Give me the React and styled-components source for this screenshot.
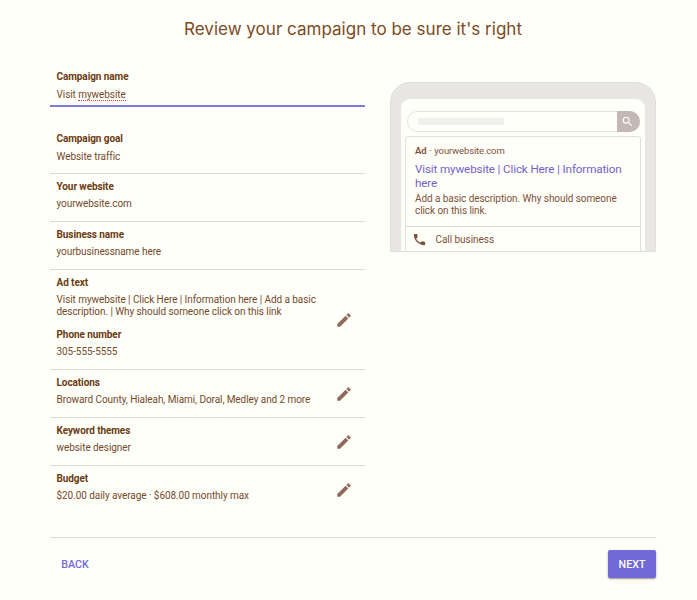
import React from "react";
import styled, { createGlobalStyle } from "styled-components";

const Global = createGlobalStyle`
  * { box-sizing: border-box; }
  body { margin: 0; background: #fffffa; font-family: Roboto, sans-serif; color: #6b3a10; }
`;

const Page = styled.main`
  width: 697px;
  height: 600px;
  overflow: hidden;
  padding: 16px 41px 0 50px;
  display: flex;
  flex-direction: column;
`;
const Title = styled.h1`
  margin: 0;
  height: 26px;
  line-height: 25px;
  text-align: center;
  white-space: nowrap;
  font-family: Inter, sans-serif;
  font-weight: 400;
  font-size: 17.05px;
  color: #7b4a26;
`;
const Columns = styled.div`
  display: flex;
  justify-content: space-between;
  height: 495px;
`;
const Summary = styled.section`
  width: 315px;
  padding-top: 23px;
`;
const Row = styled.div`
  display: flex;
  align-items: center;
  justify-content: space-between;
  height: ${(p) => p.$height || 48}px;
  padding: 0 12px 0 6.5px;
  border-bottom: 1px solid ${(p) => (p.$last ? "transparent" : "#dadad8")};
`;
const NameField = styled.div`
  height: 42px;
  padding: 6px 6.5px 0;
  margin-bottom: 19px;
  border-bottom: 2px solid #7a7de0;
`;
const Details = styled.div`
  flex: 1;
  align-self: flex-start;
  padding-top: 7px;
`;
const Label = styled.div`
  font-size: 10px;
  letter-spacing: -0.08px;
  line-height: 12px;
  font-weight: 700;
  margin-top: ${(p) => p.$top || 0}px;
`;
const Value = styled.div`
  width: 275px;
  margin-top: ${(p) => p.$top ?? 5}px;
  font-size: 10px;
  letter-spacing: -0.07px;
  line-height: 12px;
  color: #744a2c;
  white-space: nowrap;
`;
const Misspelled = styled.span`
  border-bottom: 1px dotted #e8403c;
`;
const IconButton = styled.button`
  display: flex;
  padding: 0;
  border: 0;
  background: none;
  color: #906d5b;
  margin-top: 1px;
`;

const Phone = styled.section`
  width: 266px;
  height: 170px;
  margin-top: 40px;
  padding: 16px 10px 0;
  border: 1px solid #e0dfdc;
  border-radius: 20px 20px 0 0;
  background: #e8e7e4;
`;
const Screen = styled.div`
  height: 152px;
  padding: 12px 4px 0;
  background: #fffffa;
  border-radius: 9px 9px 0 0;
`;
const SearchBar = styled.div`
  display: flex;
  justify-content: space-between;
  align-items: center;
  height: 21px;
  margin: 0 1px 0 2px;
  padding-left: 10px;
  border: 1px solid #e3e2df;
  border-radius: 11px;
`;
const Placeholder = styled.div`
  width: 86px;
  height: 7px;
  border-radius: 1px;
  background: #f0f0ed;
`;
const SearchButton = styled.div`
  width: 23px;
  height: 21px;
  margin-right: -1px;
  display: flex;
  align-items: center;
  justify-content: center;
  padding-right: 3px;
  background: #c4b8b5;
  border-radius: 0 11px 11px 0;
  color: #fffffa;
`;
const AdCard = styled.div`
  height: 115px;
  margin-top: 4px;
  border: 1px solid #e0dfdc;
  border-bottom: 0;
  border-radius: 4px 4px 0 0;
`;
const AdBody = styled.div`
  height: 90px;
  padding: 8px 9px 0;
  border-bottom: 1px solid #dadad8;
  white-space: nowrap;
`;
const AdSource = styled.div`
  font-size: 9.5px;
  letter-spacing: -0.15px;
  word-spacing: 0.6px;
  line-height: 12px;
  color: #7d5139;
`;
const AdBadge = styled.span`
  font-weight: 600;
`;
const AdHeadline = styled.div`
  margin-top: 5px;
  font-size: 11.7px;
  letter-spacing: -0.15px;
  line-height: 14px;
  color: #7461c8;
`;
const AdDescription = styled.div`
  margin-top: 3px;
  font-size: 10px;
  letter-spacing: -0.075px;
  line-height: 12px;
  color: #7d5139;
`;
const CallRow = styled.div`
  display: flex;
  align-items: center;
  height: 24px;
  padding-left: 6px;
  gap: 8.5px;
  font-size: 10px;
  letter-spacing: -0.05px;
  color: #7d5139;
`;
const Footer = styled.footer`
  display: flex;
  justify-content: space-between;
  align-items: flex-start;
  padding-top: 12px;
  border-top: 1px solid #dadad8;
`;
const Button = styled.button`
  height: 28px;
  width: ${(p) => (p.$primary ? 48 : 50)}px;
  padding: 0;
  border: 0;
  border-radius: 2px;
  font: 500 10.7px/29px Roboto, sans-serif;
  color: ${(p) => (p.$primary ? "#fffffa" : "#7069d8")};
  background: ${(p) => (p.$primary ? "#7069d8" : "none")};
  box-shadow: ${(p) => (p.$primary ? "0 1px 2px rgba(90, 50, 40, 0.55)" : "none")};
`;

const Icon = ({ size, d }) => (
  <svg width={size} height={size} viewBox="0 0 24 24" fill="currentColor">
    <path d={d} />
  </svg>
);
const PENCIL =
  "M3 17.25V21h3.75L17.81 9.94l-3.75-3.75L3 17.25zM20.71 7.04a1 1 0 0 0 0-1.41l-2.34-2.34a1 1 0 0 0-1.41 0l-1.83 1.83 3.75 3.75 1.83-1.83z";
const SEARCH =
  "M15.5 14h-.79l-.28-.27A6.47 6.47 0 0 0 16 9.5 6.5 6.5 0 1 0 9.5 16c1.61 0 3.09-.59 4.23-1.57l.27.28v.79l5 4.99L20.49 19l-4.99-5zm-6 0a4.5 4.5 0 1 1 0-9 4.5 4.5 0 0 1 0 9z";
const CALL =
  "M6.62 10.79a15.15 15.15 0 0 0 6.59 6.59l2.2-2.2a1 1 0 0 1 1.02-.24c1.12.37 2.33.57 3.57.57a1 1 0 0 1 1 1V20a1 1 0 0 1-1 1C10.61 21 3 13.39 3 4a1 1 0 0 1 1-1h3.5a1 1 0 0 1 1 1c0 1.25.2 2.45.57 3.57a1 1 0 0 1-.25 1.02l-2.2 2.2z";

const Edit = () => (
  <IconButton aria-label="Edit">
    <Icon size={18} d={PENCIL} />
  </IconButton>
);

const Field = ({ label, value, gap, editable, last }) => (
  <Row $last={last}>
    <Details>
      <Label>{label}</Label>
      <Value $top={gap}>{value}</Value>
    </Details>
    {editable && <Edit />}
  </Row>
);

export default function App() {
  return (
    <Page>
      <Global />
      <Title>Review your campaign to be sure it's right</Title>
      <Columns>
        <Summary>
          <NameField>
            <Label>Campaign name</Label>
            <Value $top={6}>
              Visit <Misspelled>mywebsite</Misspelled>
            </Value>
          </NameField>
          <Field label="Campaign goal" value="Website traffic" gap={6} />
          <Field label="Your website" value="yourwebsite.com" />
          <Field label="Business name" value="yourbusinessname here" />
          <Row $height={100}>
            <Details>
              <Label>Ad text</Label>
              <Value>
                Visit mywebsite | Click Here | Information here | Add a basic
                <br />
                description. | Why should someone click on this link
              </Value>
              <Label $top={11}>Phone number</Label>
              <Value>305-555-5555</Value>
            </Details>
            <Edit />
          </Row>
          <Field label="Locations" value="Broward County, Hialeah, Miami, Doral, Medley and 2 more" editable />
          <Field label="Keyword themes" value="website designer" editable />
          <Field label="Budget" value="$20.00 daily average · $608.00 monthly max" editable last />
        </Summary>
        <Phone>
          <Screen>
            <SearchBar>
              <Placeholder />
              <SearchButton>
                <Icon size={13} d={SEARCH} />
              </SearchButton>
            </SearchBar>
            <AdCard>
              <AdBody>
                <AdSource>
                  <AdBadge>Ad</AdBadge> · yourwebsite.com
                </AdSource>
                <AdHeadline>
                  Visit mywebsite | Click Here | Information
                  <br />
                  here
                </AdHeadline>
                <AdDescription>
                  Add a basic description. Why should someone
                  <br />
                  click on this link.
                </AdDescription>
              </AdBody>
              <CallRow>
                <Icon size={15} d={CALL} />
                Call business
              </CallRow>
            </AdCard>
          </Screen>
        </Phone>
      </Columns>
      <Footer>
        <Button>BACK</Button>
        <Button $primary>NEXT</Button>
      </Footer>
    </Page>
  );
}
